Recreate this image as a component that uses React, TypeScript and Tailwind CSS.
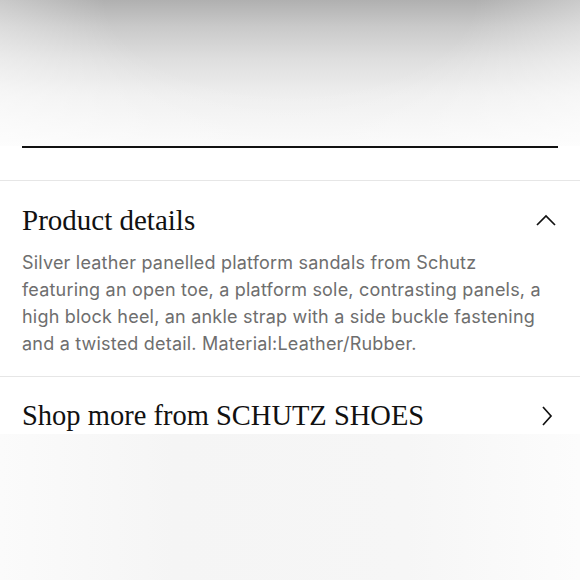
export default function App() {
  return (
    <div className="w-[580px] h-[580px] overflow-hidden bg-white flex flex-col">
      {/* blurred product image above */}
      <div className="h-[146px] bg-[linear-gradient(to_bottom,#b0b0b0_0%,#c9c9c9_18%,#dedede_40%,#eeeeee_65%,#f8f8f8_100%)] relative">
        <div className="absolute inset-0 bg-[radial-gradient(ellipse_at_50%_0%,transparent_45%,rgba(255,255,255,0.7)_100%)]" />
      </div>
      <div className="px-[22px] bg-white">
        <div className="h-[2px] bg-[#111]" />
      </div>
      <div className="h-[32px]" />
      <div className="border-t border-[#e6e6e6]" />

      <section className="px-[22px] pt-[21px] pb-[19px]">
        <div className="flex items-center justify-between">
          <h2 className="font-['Liberation_Serif',serif] text-[29px] leading-[36px] text-[#111]">
            Product details
          </h2>
          <svg width="20" height="12" viewBox="0 0 20 12" className="mr-[2px]">
            <path d="M1 11 L10 2 L19 11" fill="none" stroke="#111" strokeWidth="1.7" />
          </svg>
        </div>
        <p className="mt-[11px] font-['Inter',sans-serif] text-[18px] tracking-[0.2px] leading-[27px] text-[#6e6e6e] whitespace-nowrap">
          Silver leather panelled platform sandals from Schutz
          <br />
          featuring an open toe, a platform sole, contrasting panels, a
          <br />
          high block heel, an ankle strap with a side buckle fastening
          <br />
          and a twisted detail. Material:Leather/Rubber.
        </p>
      </section>

      <div className="border-t border-[#e6e6e6]" />
      <section className="px-[22px] pt-[21px] flex items-center justify-between">
        <h2 className="font-['Liberation_Serif',serif] text-[28.5px] leading-[36px] text-[#111]">
          Shop more from SCHUTZ SHOES
        </h2>
        <svg width="12" height="20" viewBox="0 0 12 20" className="mr-[5px]">
          <path d="M2 1 L10 10 L2 19" fill="none" stroke="#111" strokeWidth="1.7" />
        </svg>
      </section>
      <div className="flex-1 bg-[linear-gradient(to_right,#fbfbfb,#f5f5f5_30%,#f6f6f6_70%,#fcfcfc)]" />
    </div>
  );
}
